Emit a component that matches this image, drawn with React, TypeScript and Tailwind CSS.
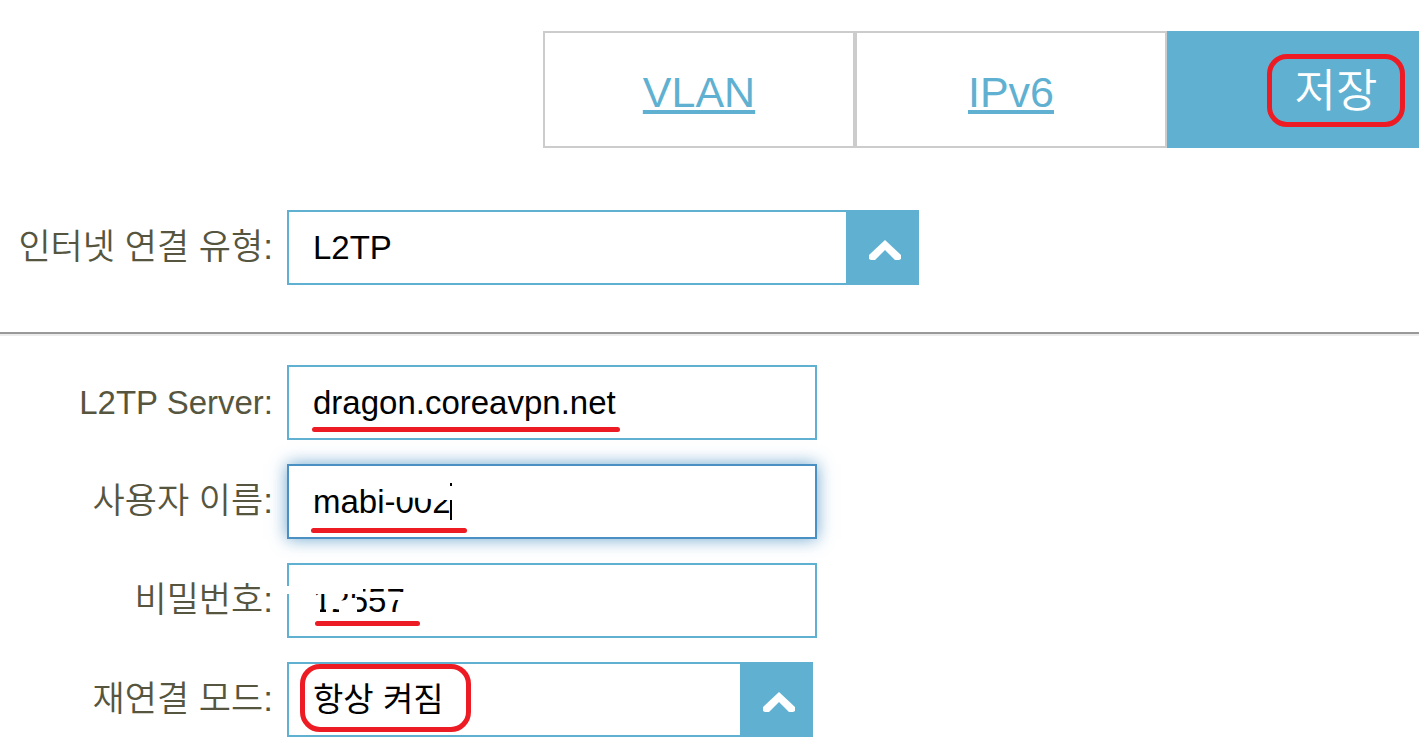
import type { ReactNode } from 'react';

const boxClass =
  'h-[75px] w-full border-2 border-[#60b1d1] bg-white pl-6 text-[33px] text-black outline-none';

function Field({ id, label, large = true, children }: { id: string; label: string; large?: boolean; children: ReactNode }) {
  return (
    <div className="flex items-center">
      <label
        htmlFor={id}
        className={`w-[287px] shrink-0 pr-[14px] text-right font-[350] whitespace-nowrap text-[#565640] ${large ? 'text-[35px]' : 'text-[33px]'}`}
      >
        {label}
      </label>
      {children}
    </div>
  );
}

function Dropdown({ id, value, widthClass, children }: { id: string; value: string; widthClass: string; children?: ReactNode }) {
  return (
    <div className={`relative flex h-[75px] ${widthClass}`}>
      <select id={id} defaultValue={value} className={`${boxClass} min-w-0 flex-1 appearance-none border-r-0`}>
        <option>{value}</option>
      </select>
      <span className="pointer-events-none flex w-[73px] shrink-0 items-center justify-center bg-[#60b1d1]">
        <svg width="36" height="24" viewBox="0 0 36 24" className="mt-1 ml-1" aria-hidden="true">
          <path d="M18 2 L34 17 V21 L32 22 H28 L18 12 L8 22 H4 L2 21 V17 Z" fill="#fff" />
        </svg>
      </span>
      {children}
    </div>
  );
}

function Underline({ className }: { className: string }) {
  return <span className={`pointer-events-none absolute h-[5px] rounded-full bg-[#ed1c24] ${className}`} />;
}

export default function App() {
  return (
    <main className="min-h-screen overflow-hidden bg-white pt-[31px] font-['Liberation_Sans','Noto_Sans_CJK_KR',sans-serif]">
      <nav className="flex h-[117px] pl-[543px] text-[43px]">
        <a href="#vlan" className="flex w-78 shrink-0 items-center justify-center border-2 border-[#ccc] pt-[6px] text-[#60b1d1] underline decoration-4 underline-offset-3">
          VLAN
        </a>
        <a href="#ipv6" className="flex w-78 shrink-0 items-center justify-center border-2 border-[#ccc] pt-[6px] text-[#60b1d1] underline decoration-4 underline-offset-3">
          IPv6
        </a>
        <button type="button" className="flex flex-1 items-center justify-end bg-[#60b1d1] pt-[2px] pr-[14px] font-[350] text-white">
          <span className="flex h-[73px] w-[138px] items-center justify-center rounded-[20px] border-5 border-[#ed1c24] pt-[2px] text-[45px]">
            저장
          </span>
        </button>
      </nav>

      <form>
        <div className="mt-[62px]">
          <Field id="type" label="인터넷 연결 유형:">
            <Dropdown id="type" value="L2TP" widthClass="w-[632px]" />
          </Field>
        </div>

        <hr className="mt-[47px] border-t-2 border-[#999] shadow-[0_2px_0_#ececec]" />

        <div className="mt-[31px] flex flex-col gap-6">
          <Field id="server" label="L2TP Server:" large={false}>
            <div className="relative w-[530px]">
              <input id="server" type="text" defaultValue="dragon.coreavpn.net" className={boxClass} />
              <Underline className="bottom-2 left-[25px] w-[308px]" />
            </div>
          </Field>

          <Field id="user" label="사용자 이름:">
            <div className="relative w-[530px]">
              <input
                id="user"
                type="text"
                defaultValue="mabi-002"
                className="h-[75px] w-full border-2 border-[#4a90c2] bg-white pl-6 text-[33px] text-black shadow-[0_0_16px_#4a90c2cc] outline-none"
              />
              <span className="pointer-events-none absolute top-[19px] left-[163px] h-[37px] w-[2px] bg-black" />
              <svg className="pointer-events-none absolute top-0 left-0" width="200" height="71" viewBox="0 0 200 71" aria-hidden="true">
                <path d="M109 22 H169 V36 H150 L136 34 L109 33 Z" fill="#fff" />
              </svg>
              <Underline className="bottom-[6px] left-6 w-[156px]" />
            </div>
          </Field>

          <Field id="password" label="비밀번호:">
            <div className="relative w-[530px]">
              <input id="password" type="text" defaultValue="12557" className={boxClass} />
              <svg className="pointer-events-none absolute top-0 left-0" width="200" height="71" viewBox="0 0 200 71" aria-hidden="true">
                <path d="M0 23 H76 V29 H120 V37 H104 L100 35 H84 L78 31 H0 Z" fill="#fff" />
                <path d="M45 31 H52 L53 38 L63 36 V50 H52 V46 H45 Z M63 35 H70 V41 H63 Z M63 43 H70 V50 H63 Z" fill="#fff" />
                <path d="M27 33 H33 V50 H27 Z M39 44 H44 V50 H39 Z" fill="#fff" />
              </svg>
              <Underline className="bottom-3 left-7 w-[105px]" />
            </div>
          </Field>

          <Field id="mode" label="재연결 모드:">
            <Dropdown id="mode" value="항상 켜짐" widthClass="w-[526px]">
              <span className="pointer-events-none absolute top-[2px] left-[13px] h-[68px] w-[171px] rounded-[20px] border-5 border-[#ed1c24]" />
            </Dropdown>
          </Field>
        </div>
      </form>
    </main>
  );
}
